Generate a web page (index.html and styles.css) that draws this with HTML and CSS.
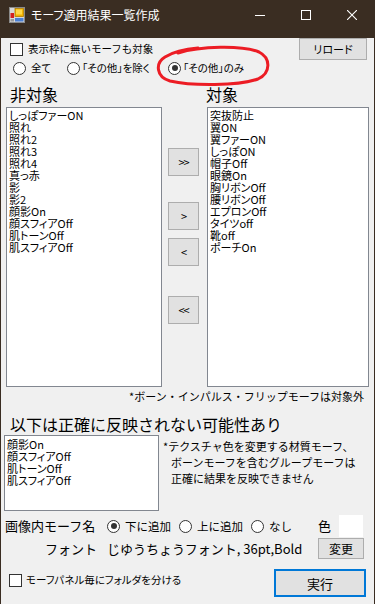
FILE: index.html
```html
<!DOCTYPE html>
<html lang="ja">
<head>
<meta charset="utf-8">
<title>モーフ適用結果一覧作成</title>
<link rel="stylesheet" href="styles.css">
</head>
<body>
<div class="window">
  <div class="titlebar">
    <svg class="app-icon" viewBox="0 0 16 16" width="16" height="16">
      <rect x="0.5" y="0.5" width="15" height="15" fill="#d8d8d8" stroke="#8a8a8a"/>
      <rect x="6" y="1.5" width="8.5" height="8" fill="#f2b400" stroke="#b07a00" stroke-width="0.8"/>
      <rect x="7" y="2.5" width="6" height="5" fill="#ffd84a"/>
      <rect x="1.5" y="6" width="3.5" height="5" fill="#d42020"/>
      <rect x="6" y="11" width="8.5" height="3.5" fill="#4a7fd4"/>
      <rect x="1.5" y="12" width="3.5" height="2.5" fill="#9a9a9a"/>
    </svg>
    <span class="title">モーフ適用結果一覧作成</span>
    <div class="controls">
      <span class="ctl"><svg viewBox="0 0 10 10" width="10" height="10"><path d="M0 5.5H10" stroke="#fff" stroke-width="1"/></svg></span>
      <span class="ctl"><svg viewBox="0 0 10 10" width="10" height="10"><rect x="0.5" y="0.5" width="9" height="9" fill="none" stroke="#fff" stroke-width="1"/></svg></span>
      <span class="ctl"><svg viewBox="0 0 10 10" width="10" height="10"><path d="M0 0L10 10M10 0L0 10" stroke="#fff" stroke-width="1.1"/></svg></span>
    </div>
  </div>

  <div class="client">
    <div class="row-top">
      <label class="check"><span class="box"></span><span class="ctext">表示枠に無いモーフも対象</span></label>
      <button class="btn btn-reload">リロード</button>
    </div>

    <div class="row-radios">
      <label class="radio r1"><span class="dot"></span><span class="rtext">全て</span></label>
      <label class="radio r2"><span class="dot"></span><span class="rtext">「その他」を除く</span></label>
      <label class="radio r3"><span class="dot on"></span><span class="rtext">「その他」のみ</span></label>
    </div>

    <div class="lists-head">
      <span class="head-left">非対象</span>
      <span class="head-right">対象</span>
    </div>

    <div class="lists">
      <div class="listbox list-left">
        <div class="item">しっぽファーON</div>
        <div class="item">照れ</div>
        <div class="item">照れ2</div>
        <div class="item">照れ3</div>
        <div class="item">照れ4</div>
        <div class="item">真っ赤</div>
        <div class="item">影</div>
        <div class="item">影2</div>
        <div class="item">顔影On</div>
        <div class="item">顔スフィアOff</div>
        <div class="item">肌トーンOff</div>
        <div class="item">肌スフィアOff</div>
      </div>
      <div class="movers">
        <button class="btn abtn a1">&gt;&gt;</button>
        <button class="btn abtn a2">&gt;</button>
        <button class="btn abtn a3">&lt;</button>
        <button class="btn abtn a4">&lt;&lt;</button>
      </div>
      <div class="listbox list-right">
        <div class="item">突抜防止</div>
        <div class="item">翼ON</div>
        <div class="item">翼ファーON</div>
        <div class="item">しっぽON</div>
        <div class="item">帽子Off</div>
        <div class="item">眼鏡On</div>
        <div class="item">胸リボンOff</div>
        <div class="item">腰リボンOff</div>
        <div class="item">エプロンOff</div>
        <div class="item">タイツoff</div>
        <div class="item">靴off</div>
        <div class="item">ポーチOn</div>
      </div>
    </div>

    <div class="note-right">*ボーン・インパルス・フリップモーフは対象外</div>

    <div class="heading">以下は正確に反映されない可能性あり</div>

    <div class="warn-row">
      <div class="listbox list-small">
        <div class="item">顔影On</div>
        <div class="item">顔スフィアOff</div>
        <div class="item">肌トーンOff</div>
        <div class="item">肌スフィアOff</div>
      </div>
      <div class="warn-text">
        <div>*テクスチャ色を変更する材質モーフ、</div>
        <div class="indent">ボーンモーフを含むグループモーフは</div>
        <div class="indent">正確に結果を反映できません</div>
      </div>
    </div>

    <div class="name-row">
      <span class="name-label">画像内モーフ名</span>
      <label class="radio n1"><span class="dot on"></span><span class="ntext">下に追加</span></label>
      <label class="radio n2"><span class="dot"></span><span class="ntext">上に追加</span></label>
      <label class="radio n3"><span class="dot"></span><span class="ntext">なし</span></label>
      <span class="color-label">色</span>
      <span class="swatch"></span>
    </div>

    <div class="font-row">
      <span class="font-label">フォント</span>
      <span class="font-name">じゆうちょうフォント, 36pt,Bold</span>
      <button class="btn btn-change">変更</button>
    </div>

    <div class="bottom-row">
      <label class="check check-bottom"><span class="box"></span><span class="ctext">モーフパネル毎にフォルダを分ける</span></label>
      <button class="btn btn-run">実行</button>
    </div>
  </div>

  <svg class="red-mark" viewBox="0 0 375 604" width="375" height="604">
    <path d="M178 53 C 200 46, 242 45, 259 52 C 271 58, 271 73, 258 79 C 238 86, 192 86, 170 81 C 156 77, 155 63, 165 57 C 173 52, 186 49, 198 48" fill="none" stroke="#ec1c24" stroke-width="3" stroke-linecap="round"/>
  </svg>
</div>
</body>
</html>
```

FILE: styles.css
```css
* { box-sizing: border-box; }
html, body { margin: 0; padding: 0; }
body {
  width: 375px;
  height: 604px;
  overflow: hidden;
  background: #3a2d22;
  font-family: "Noto Sans CJK JP", "Noto Sans", sans-serif;
  color: #000;
}
button { font-family: inherit; color: #000; padding: 0; margin: 0; }

.window { position: relative; width: 375px; height: 604px; }

.titlebar {
  height: 30px;
  background: #3a2d22;
  display: flex;
  align-items: center;
  color: #fff;
}
.app-icon { display: block; margin-left: 9px; }
.title {
  margin-left: 6px;
  font-size: 12px;
  line-height: 16px;
  font-feature-settings: "palt";
}
.controls { margin-left: auto; display: flex; height: 30px; }
.ctl {
  width: 46px;
  height: 30px;
  display: flex;
  align-items: center;
  justify-content: center;
}
.ctl svg { display: block; }

.client {
  height: 574px;
  background: #f0f0f0;
  border: 1px solid #3a2d22;
  border-top: 0;
}

.btn {
  background: #e1e1e1;
  border: 1px solid #adadad;
  display: flex;
  align-items: center;
  justify-content: center;
}

/* checkbox / radio */
.check { display: flex; align-items: center; }
.box {
  width: 13px;
  height: 13px;
  border: 1px solid #333;
  background: #fff;
  flex: none;
}
.ctext {
  margin-left: 5px;
  font-size: 10.5px;
  line-height: 14px;
  white-space: nowrap;
}
.radio { display: flex; align-items: center; }
.dot {
  width: 13px;
  height: 13px;
  border: 1px solid #333;
  border-radius: 50%;
  background: #fff;
  flex: none;
  display: flex;
  align-items: center;
  justify-content: center;
}
.dot.on::after {
  content: "";
  width: 6px;
  height: 6px;
  border-radius: 50%;
  background: #333;
}

/* row 1 */
.row-top {
  margin-top: 8px;
  height: 22px;
  display: flex;
  align-items: center;
  padding-left: 9px;
}
.btn-reload {
  margin-left: auto;
  margin-right: 7px;
  width: 68px;
  height: 22px;
  font-size: 11px;
  font-feature-settings: "palt";
}

/* row 2 */
.row-radios {
  height: 16px;
  display: flex;
  align-items: center;
  padding-left: 12px;
}
.rtext {
  margin-left: 5px;
  font-size: 10.5px;
  line-height: 14px;
  white-space: nowrap;
  font-feature-settings: "palt";
}
.r1 { width: 54px; flex: none; }
.r2 { width: 101px; flex: none; }
.r2 .rtext, .r3 .rtext { margin-left: 2px; }

/* list heads */
.lists-head {
  margin-top: 8px;
  height: 20px;
  display: flex;
  font-size: 16px;
  line-height: 20px;
}
.head-left { width: 205px; padding-left: 9px; }

/* lists */
.lists {
  margin-top: 3px;
  height: 280px;
  display: flex;
  padding-left: 5px;
}
.listbox {
  border: 1px solid #828790;
  background: #fff;
  padding: 1px 2px 0;
  white-space: nowrap;
  overflow: hidden;
}
.item {
  font-size: 11px;
  line-height: 12px;
  height: 12px;
  font-feature-settings: "palt";
}
.list-left { width: 156px; }
.list-right { width: 162px; margin-left: 8px; }
.movers {
  width: 31px;
  margin-left: 6px;
  display: flex;
  flex-direction: column;
  padding-top: 41px;
}
.abtn {
  width: 31px;
  height: 28px;
  font-size: 11px;
  letter-spacing: -1px;
}
.a2 { margin-top: 26px; }
.a3 { margin-top: 8px; }
.a4 { margin-top: 30px; }

.note-right {
  margin-top: 1px;
  height: 16px;
  text-align: right;
  padding-right: 10px;
  font-size: 11px;
  line-height: 16px;
}

.heading {
  margin-top: 10px;
  height: 20px;
  padding-left: 9px;
  font-size: 16px;
  line-height: 20px;
}

.warn-row {
  margin-top: 1px;
  height: 76px;
  display: flex;
  padding-left: 3px;
}
.list-small { width: 155px; height: 76px; padding-top: 2px; }
.warn-text {
  margin-left: 4px;
  padding-top: 3px;
  font-size: 11px;
  line-height: 16px;
}
.warn-text .indent { padding-left: 8px; }

.name-row {
  margin-top: 4px;
  height: 22px;
  display: flex;
  align-items: center;
  padding-left: 4px;
}
.name-label { width: 102px; font-size: 13px; line-height: 18px; }
.ntext { margin-left: 5px; font-size: 11.5px; line-height: 16px; }
.n1, .n2 { width: 72px; }
.n3 { width: 67px; }
.color-label { width: 21px; font-size: 13px; line-height: 18px; }
.swatch { width: 24px; height: 22px; background: #fff; }

.font-row {
  margin-top: 1px;
  height: 21px;
  display: flex;
  align-items: center;
  padding-left: 44px;
}
.font-label { width: 62px; font-size: 13px; line-height: 18px; }
.font-name { font-size: 13px; line-height: 18px; }
.btn-change {
  margin-left: auto;
  margin-right: 10px;
  width: 46px;
  height: 21px;
  font-size: 12px;
}

.bottom-row {
  margin-top: 10px;
  height: 28px;
  display: flex;
  align-items: flex-start;
  padding-left: 8px;
}
.check-bottom { margin-top: 4px; }
.check-bottom .ctext { margin-left: 4px; font-size: 10.5px; font-feature-settings: "palt"; }
.btn-run {
  margin-left: auto;
  margin-right: 8px;
  width: 92px;
  height: 28px;
  border: 2px solid #0078d7;
  font-size: 13px;
}

.red-mark {
  position: absolute;
  left: 0;
  top: 0;
  pointer-events: none;
}
```
